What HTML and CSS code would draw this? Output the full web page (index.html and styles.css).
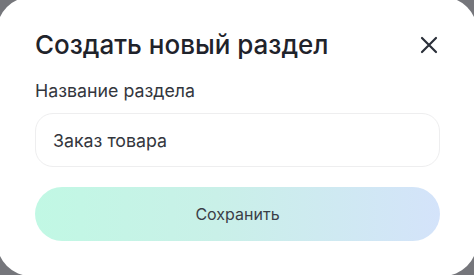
FILE: index.html
```html
<!DOCTYPE html>
<html lang="ru">
<head>
    <meta charset="UTF-8">
    <meta name="viewport" content="width=device-width, initial-scale=1.0">
    <title>Создать новый раздел</title>
    <link rel="stylesheet" href="styles.css">
</head>
<body>
    <div class="modal">
        <div class="modal-header">
            <h2 class="modal-title">Создать новый раздел</h2>
            <button class="close-btn" aria-label="Закрыть">
                <svg width="18" height="18" viewBox="0 0 18 18" fill="none">
                    <path d="M2 2L16 16M16 2L2 16" stroke="#2b303a" stroke-width="2.2" stroke-linecap="round"/>
                </svg>
            </button>
        </div>
        <label class="field-label" for="section-name">Название раздела</label>
        <input class="field-input" id="section-name" type="text" value="Заказ товара">
        <button class="save-btn">Сохранить</button>
    </div>
</body>
</html>
```

FILE: styles.css
```css
body {
    margin: 0;
    background-color: #75767b;
    font-family: Inter, "Noto Sans", sans-serif;
    overflow: hidden;
}
.modal {
    margin: -3px -3px 0 -3px;
    height: 279px;
    box-sizing: border-box;
    padding: 32px 37px 0 38px;
    background-color: #ffffff;
    border-radius: 34px;
    display: flex;
    flex-direction: column;
}
.modal-header {
    display: flex;
    align-items: center;
    justify-content: space-between;
}
.modal-title {
    margin: 0;
    font-size: 26px;
    font-weight: 500;
    line-height: 32px;
    color: #1f232b;
}
.close-btn {
    border: none;
    background: none;
    padding: 0;
    margin-right: 2px;
    width: 18px;
    height: 18px;
    cursor: pointer;
    display: flex;
}
.field-label {
    margin-top: 19px;
    font-size: 17.8px;
    line-height: 22px;
    color: #33363d;
}
.field-input {
    margin-top: 11px;
    height: 54px;
    flex-shrink: 0;
    box-sizing: border-box;
    padding: 0 17px;
    border: 1px solid #eeeeef;
    border-radius: 18px;
    font-family: inherit;
    font-size: 17.8px;
    color: #33363d;
    outline: none;
}
.save-btn {
    margin-top: 20px;
    height: 54px;
    flex-shrink: 0;
    border: none;
    border-radius: 27px;
    background: linear-gradient(to right, #c1f8e4, #c9f0e8 45%, #d4e3fa);
    font-family: inherit;
    font-size: 16px;
    color: #3a3e47;
    cursor: pointer;
}
```
